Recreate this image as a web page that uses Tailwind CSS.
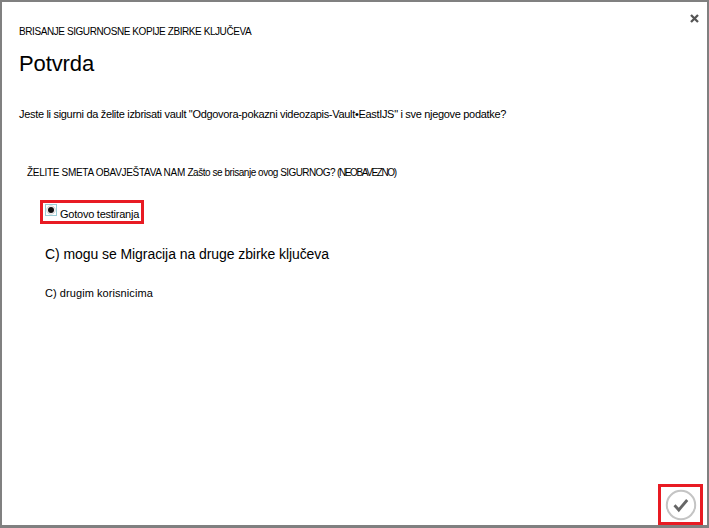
<!DOCTYPE html>
<html lang="hr">
<head>
<meta charset="utf-8">
<title>Potvrda</title>
<script src="https://cdn.jsdelivr.net/npm/@tailwindcss/browser@4"></script>
</head>
<body class="bg-white">
<main class="relative flex flex-col w-[709px] h-[528px] overflow-hidden border-2 border-b-3 border-[#808080] bg-white text-black whitespace-nowrap font-['Liberation_Sans',Arial,sans-serif]">
  <button class="absolute right-[8px] top-[12px] size-[9px]" aria-label="Zatvori">
    <svg class="block" width="9" height="9" viewBox="0 0 9 9" fill="none" stroke="#555" stroke-width="2.3"><path d="M1 1l7 7M8 1l-7 7"/></svg>
  </button>
  <header class="pl-[17px] pt-[22px]">
    <p class="text-[10px] leading-4 tracking-[-0.42px]"><span>BRISANJE SIGURNOSNE KOPIJE ZBIRKE KLJUČEVA</span></p>
    <h1 class="mt-[8px] text-[22px] leading-8 tracking-[-0.1px]"><span>Potvrda</span></h1>
  </header>
  <p class="pl-[17px] mt-[26px] text-[11px] leading-4 tracking-[-0.315px]"><span>Jeste li sigurni da želite izbrisati vault "Odgovora-pokazni videozapis-Vault•EastIJS" i sve njegove podatke?</span></p>
  <section class="pl-[25px] mt-[43px]">
    <p class="text-[10px] leading-4"><span class="tracking-[-0.3px]">ŽELITE SMETA OBAVJEŠTAVA NAM </span><span class="tracking-[-0.46px]">Zašto se brisanje ovog </span><span class="tracking-[-0.6px]">SIGURNOG? </span><span class="tracking-[-1.4px]">(NEOBAVEZNO)</span></p>
    <div class="ml-[13px] mt-[19px] flex w-[104px] h-[24px] border-3 border-[#e81b23] pl-[2px] pt-[1px]">
      <svg class="block shrink-0" width="12" height="12" viewBox="0 0 12 12"><rect x=".5" y=".5" width="11" height="11" fill="none" stroke="#39a" stroke-dasharray="1 1"/><circle cx="6" cy="6" r="4.2" fill="none" stroke="#bbb" stroke-width=".7"/><circle cx="6" cy="6" r="3" fill="#111"/></svg>
      <p class="ml-[3px] mt-[2px] text-[11px] leading-4 tracking-[-0.24px]"><span>Gotovo testiranja</span></p>
    </div>
    <p class="ml-[18px] mt-[20px] text-[14px] leading-5 tracking-[-0.07px]"><span>C) mogu se Migracija na druge zbirke ključeva</span></p>
    <p class="ml-[18px] mt-[21px] text-[11px] leading-4 tracking-[0.07px]"><span>C) drugim korisnicima</span></p>
  </section>
  <footer class="mt-auto flex justify-end pr-[4px]">
    <button class="flex items-center justify-center w-[45px] h-[41px] border-3 border-[#e81b23]" aria-label="Potvrdi">
      <svg class="block" width="32" height="32" viewBox="0 0 32 32" fill="none"><circle cx="16" cy="16" r="14.2" stroke="#c4c4c4" stroke-width="2"/><path d="M9.5 16.2l4.3 4.8 8.4-10" stroke="#666" stroke-width="2.8"/></svg>
    </button>
  </footer>
</main>
</body>
</html>
